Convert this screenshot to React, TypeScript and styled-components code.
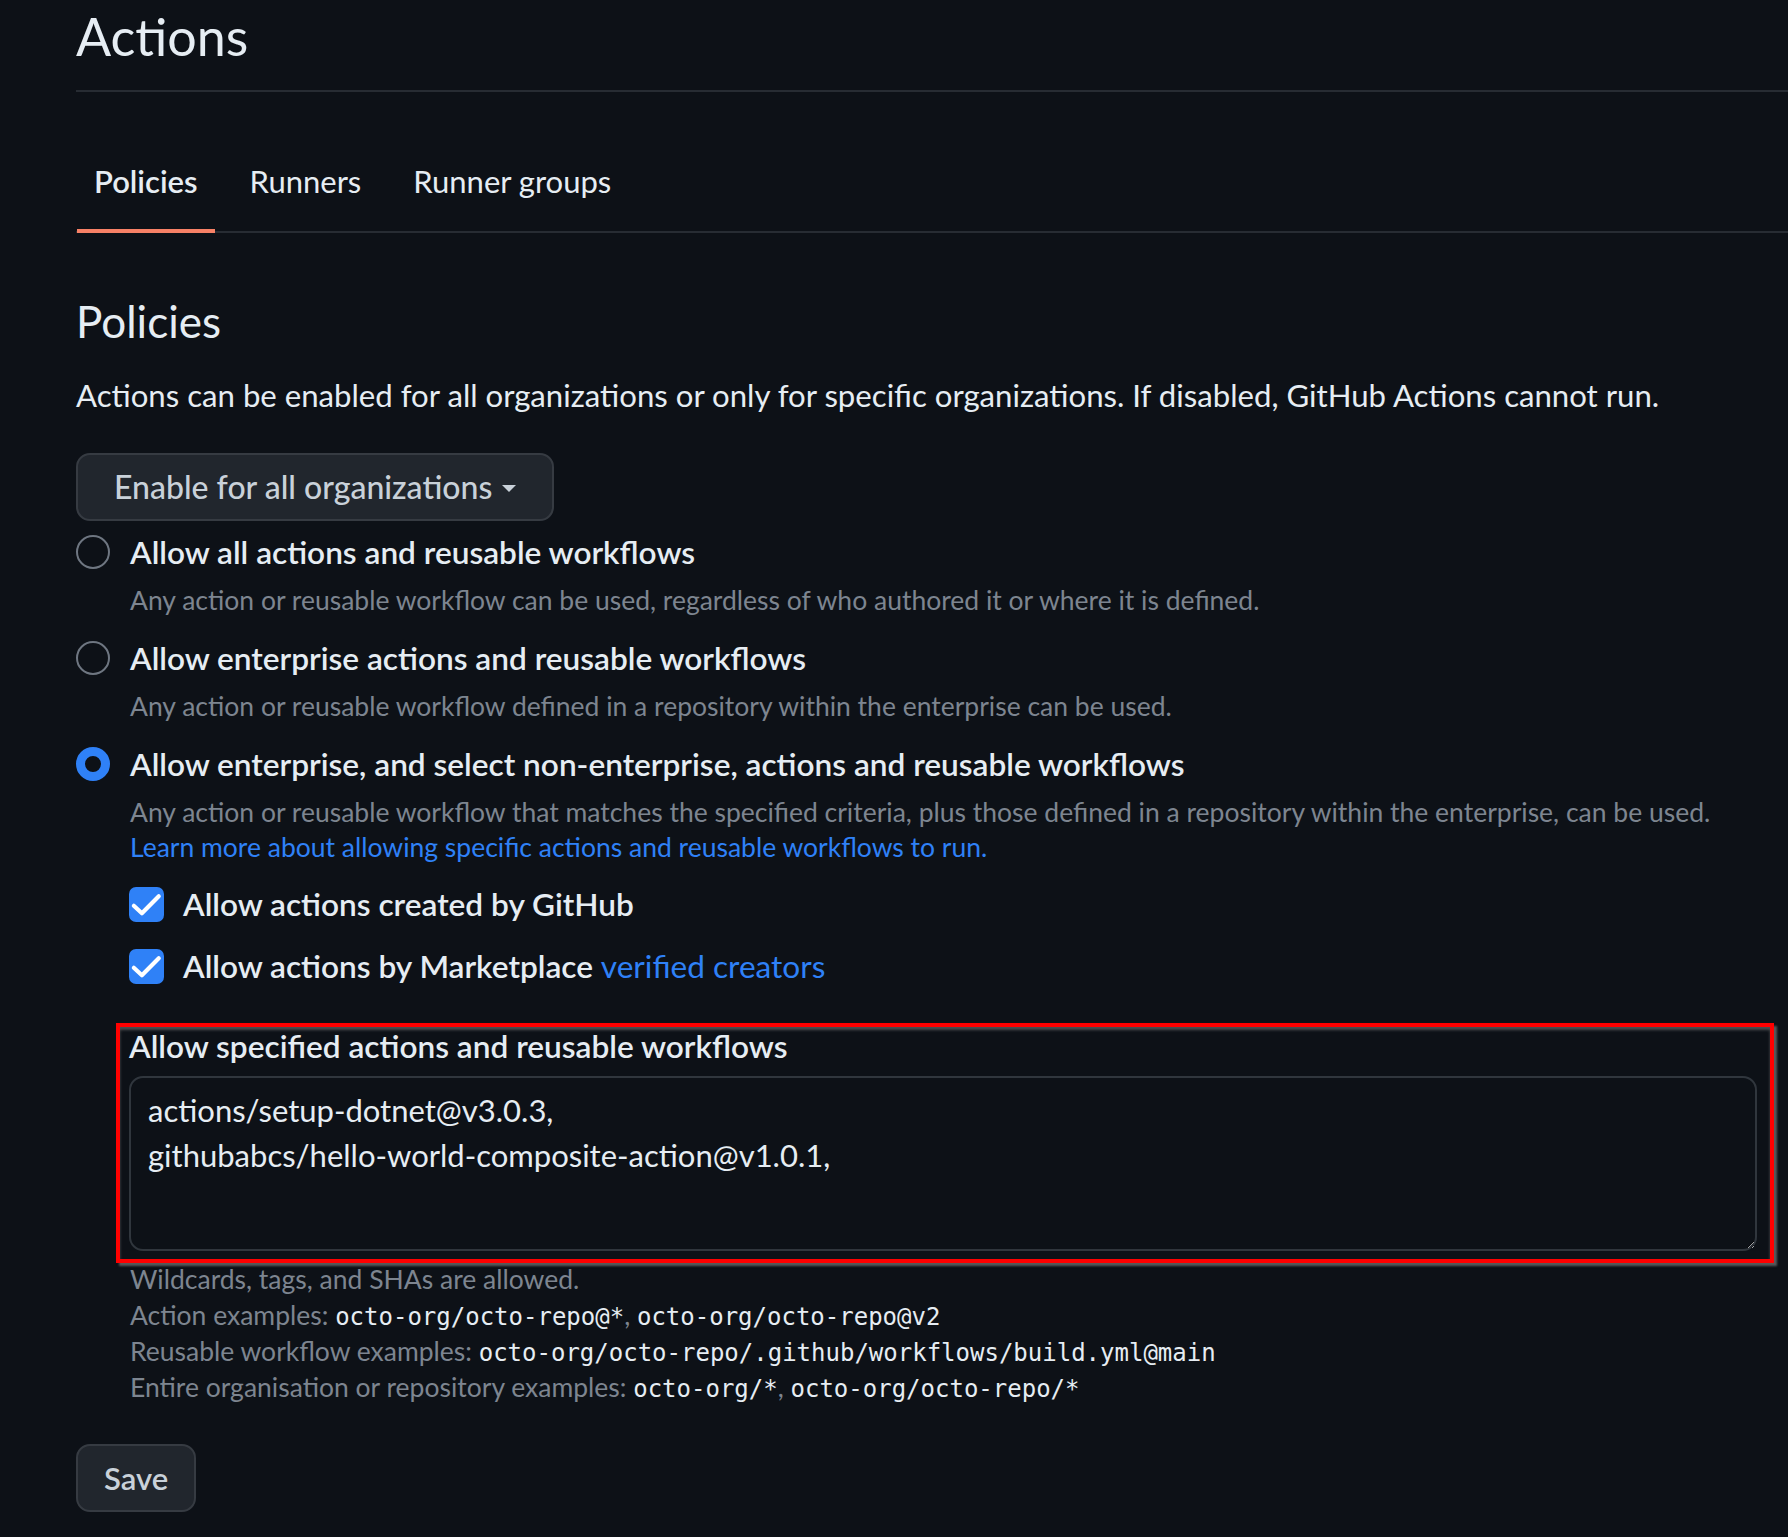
import styled, { createGlobalStyle } from 'styled-components';

const GlobalStyle = createGlobalStyle`
  html, body {
    margin: 0;
    padding: 0;
    background: #0d1117;
    overflow: hidden;
  }
  body {
    font-family: Lato, 'Noto Sans', sans-serif;
    color: #e6edf3;
  }
`;

const Page = styled.main`
  padding: 1px 0 24px 76px;
`;

const Subhead = styled.header`
  padding-bottom: 19px;
  border-bottom: 2px solid #272c33;
`;

const PageTitle = styled.h1`
  margin: 0;
  font-size: 52px;
  font-weight: 400;
  line-height: 70px;
`;

const TabNav = styled.nav`
  display: flex;
  gap: 18px;
  margin-top: 67px;
  padding-left: 1px;
  box-shadow: inset 0 -2px 0 #272c33;
`;

const Tab = styled.a<{ $active?: boolean }>`
  padding: 0 17px 26px;
  font-size: 31px;
  line-height: 44px;
  font-weight: ${(p) => (p.$active ? 600 : 400)};
  color: #e6edf3;
  text-decoration: none;
  border-bottom: 4px solid ${(p) => (p.$active ? '#f78166' : 'transparent')};
`;

const SectionTitle = styled.h2`
  margin: 60px 0 0;
  font-size: 44px;
  font-weight: 400;
  line-height: 56px;
`;

const Lead = styled.p`
  margin: 24px 0 0;
  font-size: 31.15px;
  line-height: 44px;
`;

const ButtonRow = styled.div`
  margin-top: 36px;
`;

const Button = styled.button`
  display: inline-flex;
  align-items: center;
  gap: 10px;
  box-sizing: border-box;
  height: 68px;
  padding: 0 36px;
  background: #21262d;
  border: 2px solid #363b42;
  border-radius: 14px;
  color: #c9d1d9;
  font-family: Lato, 'Noto Sans', sans-serif;
  font-size: 32px;
  font-weight: 500;
  line-height: 64px;
`;

const SaveButton = styled(Button)`
  padding: 0 26px;
  font-size: 31px;
  font-weight: 600;
`;

const Caret = styled.span`
  width: 0;
  height: 0;
  margin-top: 2px;
  border-left: 7px solid transparent;
  border-right: 7px solid transparent;
  border-top: 7px solid currentColor;
`;

const Options = styled.div`
  display: flex;
  flex-direction: column;
  gap: 20px;
  margin-top: 11px;
`;

const Option = styled.div`
  display: grid;
  grid-template-columns: 34px 1fr;
  column-gap: 20px;
`;

const RadioCell = styled.div`
  display: flex;
  align-items: center;
  height: 40px;
`;

const Radio = styled.span<{ $checked?: boolean }>`
  box-sizing: border-box;
  width: 34px;
  height: 34px;
  border-radius: 50%;
  border: ${(p) => (p.$checked ? '9px solid #2f81f7' : '2px solid #6e7681')};
`;

const OptionBody = styled.div`
  min-width: 0;
`;

const OptionLabel = styled.div`
  font-size: 31.6px;
  font-weight: 600;
  line-height: 40px;
  white-space: nowrap;
`;

const Note = styled.p`
  margin: 11px 0 0;
  font-size: 26.5px;
  line-height: 35px;
  color: #7d8590;
`;

const Link = styled.a`
  color: #2f81f7;
  text-decoration: none;
  font-weight: 400;
`;

const CheckList = styled.div`
  display: flex;
  flex-direction: column;
  gap: 22px;
  margin-top: 19px;
`;

const CheckRow = styled.label`
  display: flex;
  align-items: center;
  gap: 19px;
  margin-left: -1px;
`;

const CheckBox = styled.span`
  display: flex;
  align-items: center;
  justify-content: center;
  width: 35px;
  height: 35px;
  border-radius: 7px;
  background: #2f81f7;
`;

const Field = styled.div`
  position: relative;
  margin: 40px 31px 0 -1px;
`;

const FieldLabel = styled.label`
  display: block;
  font-size: 31.6px;
  font-weight: 600;
  line-height: 40px;
`;

const TextArea = styled.textarea`
  display: block;
  box-sizing: border-box;
  width: 100%;
  height: 175px;
  margin-top: 10px;
  padding: 10px 17px;
  background: #0d1117;
  border: 2px solid #30363d;
  border-radius: 14px;
  color: #e6edf3;
  color-scheme: dark;
  font-family: Lato, 'Noto Sans', sans-serif;
  font-size: 31px;
  line-height: 45px;
  resize: vertical;
  outline: none;
`;

// the red annotation frame drawn over the field in the screenshot
const Highlight = styled.div`
  position: absolute;
  top: -3px;
  left: -13px;
  right: -17px;
  bottom: -12px;
  border: 4px solid #ff0000;
  box-shadow: 3px 3px 2px rgba(120, 120, 120, 0.7), inset 0 3px 3px rgba(120, 120, 120, 0.6);
  pointer-events: none;
`;

const Help = styled.div`
  margin-top: 10px;
  font-size: 26.5px;
  line-height: 36px;
  color: #7d8590;
`;

const Code = styled.code`
  font-family: 'DejaVu Sans Mono', 'Liberation Mono', monospace;
  font-size: 24px;
  line-height: 1;
  color: #e6edf3;
`;

const SaveRow = styled.div`
  margin-top: 39px;
`;

const Check = () => (
  <svg width="35" height="35" viewBox="0 0 16 16" fill="none">
    <polyline
      points="2.2,8.6 5.9,12 13.6,4.2"
      stroke="#ffffff"
      strokeWidth="1.9"
      strokeLinecap="round"
      strokeLinejoin="round"
    />
  </svg>
);

const App = () => {
  return (
    <>
      <GlobalStyle />
      <Page>
        <Subhead>
          <PageTitle>Actions</PageTitle>
        </Subhead>
        <TabNav>
          <Tab $active>Policies</Tab>
          <Tab>Runners</Tab>
          <Tab>Runner groups</Tab>
        </TabNav>

        <SectionTitle>Policies</SectionTitle>
        <Lead>
          Actions can be enabled for all organizations or only for specific organizations. If disabled, GitHub
          Actions cannot run.
        </Lead>
        <ButtonRow>
          <Button>
            Enable for all organizations
            <Caret />
          </Button>
        </ButtonRow>

        <Options>
          <Option>
            <RadioCell>
              <Radio />
            </RadioCell>
            <OptionBody>
              <OptionLabel>Allow all actions and reusable workflows</OptionLabel>
              <Note>
                Any action or reusable workflow can be used, regardless of who authored it or where it is defined.
              </Note>
            </OptionBody>
          </Option>

          <Option>
            <RadioCell>
              <Radio />
            </RadioCell>
            <OptionBody>
              <OptionLabel>Allow enterprise actions and reusable workflows</OptionLabel>
              <Note>Any action or reusable workflow defined in a repository within the enterprise can be used.</Note>
            </OptionBody>
          </Option>

          <Option>
            <RadioCell>
              <Radio $checked />
            </RadioCell>
            <OptionBody>
              <OptionLabel>Allow enterprise, and select non-enterprise, actions and reusable workflows</OptionLabel>
              <Note>
                Any action or reusable workflow that matches the specified criteria, plus those defined in a
                repository within the enterprise, can be used.
                <br />
                <Link>Learn more about allowing specific actions and reusable workflows to run.</Link>
              </Note>

              <CheckList>
                <CheckRow>
                  <CheckBox>
                    <Check />
                  </CheckBox>
                  <OptionLabel>Allow actions created by GitHub</OptionLabel>
                </CheckRow>
                <CheckRow>
                  <CheckBox>
                    <Check />
                  </CheckBox>
                  <OptionLabel>
                    Allow actions by Marketplace <Link>verified creators</Link>
                  </OptionLabel>
                </CheckRow>
              </CheckList>

              <Field>
                <FieldLabel>Allow specified actions and reusable workflows</FieldLabel>
                <TextArea
                  readOnly
                  defaultValue={'actions/setup-dotnet@v3.0.3,\ngithubabcs/hello-world-composite-action@v1.0.1,'}
                />
                <Highlight />
              </Field>

              <Help>
                Wildcards, tags, and SHAs are allowed.
                <br />
                Action examples: <Code>octo-org/octo-repo@*</Code>, <Code>octo-org/octo-repo@v2</Code>
                <br />
                Reusable workflow examples: <Code>octo-org/octo-repo/.github/workflows/build.yml@main</Code>
                <br />
                Entire organisation or repository examples: <Code>octo-org/*</Code>, <Code>octo-org/octo-repo/*</Code>
              </Help>
            </OptionBody>
          </Option>
        </Options>

        <SaveRow>
          <SaveButton>Save</SaveButton>
        </SaveRow>
      </Page>
    </>
  );
};

export default App;
